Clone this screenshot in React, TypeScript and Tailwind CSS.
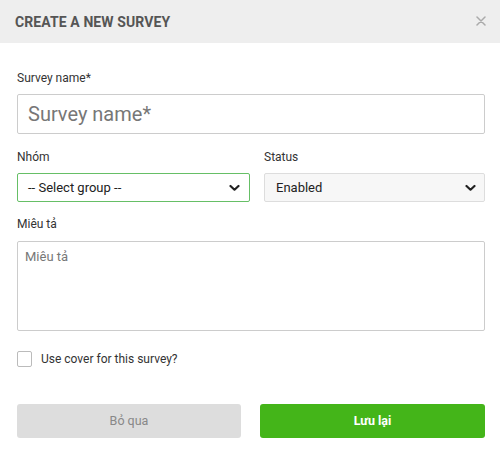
import React, { useState } from 'react';

const Chevron = () => (
    <svg className="pointer-events-none absolute right-[9px] top-1/2 -translate-y-1/2" width="11" height="7" viewBox="0 0 11 7">
        <path d="M1.5 1.5 L5.5 5.2 L9.5 1.5" fill="none" stroke="#222" strokeWidth="2.2" strokeLinecap="round" strokeLinejoin="round" />
    </svg>
);

const App = () => {
    const [useCover, setUseCover] = useState(false);

    return (
        <div className="w-[500px] h-[462px] bg-white text-[#333]" style={{ fontFamily: 'Roboto, "Liberation Sans", sans-serif' }}>
            {/* Header */}
            <div className="h-[43px] bg-[#eeeeee] flex items-center justify-between pl-[15px] pr-[14px]">
                <h2 className="text-[14px] font-bold text-[#555] tracking-[0.1px] mt-[1px]">CREATE A NEW SURVEY</h2>
                <button className="text-[#aaa] mb-[2px]" aria-label="close">
                    <svg width="10" height="10" viewBox="0 0 10 10">
                        <path d="M1 1 L9 9 M9 1 L1 9" stroke="#aaa" strokeWidth="1.5" strokeLinecap="round" />
                    </svg>
                </button>
            </div>

            {/* Body */}
            <div className="pl-[17px] pr-[15px] pt-[26px]">
                <label className="block text-[12px] leading-[18px] mb-[7px]">Survey name*</label>
                <input
                    placeholder="Survey name*"
                    className="w-full h-[40px] border border-[#cccccc] rounded-[2px] px-[10px] text-[20px] placeholder:text-[#777] outline-none"
                />

                <div className="grid grid-cols-[233px_1fr] gap-[14px] mt-[14px]">
                    <div>
                        <label className="block text-[12px] leading-[18px] mb-[7px]">Nhóm</label>
                        {/* group picker (custom, green = active) */}
                        <div
                            role="combobox"
                            aria-expanded="false"
                            className="relative h-[29px] flex items-center border border-[#66bf66] rounded-[2px] bg-white pl-[10px] text-[13px] text-[#222] cursor-pointer"
                        >
                            -- Select group --
                            <Chevron />
                        </div>
                    </div>
                    <div>
                        <label className="block text-[12px] leading-[18px] mb-[7px]">Status</label>
                        <div className="relative">
                            <select className="appearance-none w-full h-[29px] border border-solid border-[#dddddd] rounded-[2px] bg-[#f7f7f7] pl-[11px] text-[13px] text-[#222] outline-none">
                                <option>Enabled</option>
                                <option>Disabled</option>
                            </select>
                            <Chevron />
                        </div>
                    </div>
                </div>

                <label className="block text-[12px] leading-[18px] mt-[13px] mb-[8px]">Miêu tả</label>
                <textarea
                    placeholder="Miêu tả"
                    className="block w-full h-[90px] border border-[#cccccc] rounded-[2px] px-[7px] py-[5px] text-[13px] placeholder:text-[#777] outline-none resize-none"
                />

                <label className="flex items-center gap-[9px] mt-[20px] text-[12px] leading-[15px] cursor-pointer">
                    <span
                        onClick={() => setUseCover(!useCover)}
                        className={`w-[15px] h-[16px] border border-[#bbbbbb] rounded-[2px] ${useCover ? 'bg-[#44b519]' : 'bg-white'}`}
                    />
                    Use cover for this survey?
                </label>

                <div className="grid grid-cols-[224px_1fr] gap-[19px] mt-[37px]">
                    <button className="h-[34px] bg-[#dddddd] rounded-[3px] text-[12.5px] text-[#888]">Bỏ qua</button>
                    <button className="h-[34px] bg-[#44b519] rounded-[3px] text-[12.5px] font-bold text-white">Lưu lại</button>
                </div>
            </div>
        </div>
    );
};

export default App;
